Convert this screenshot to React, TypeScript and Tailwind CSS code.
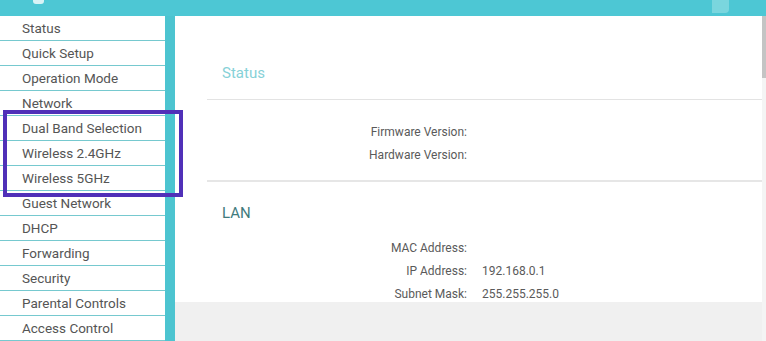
const menu = [
  'Status',
  'Quick Setup',
  'Operation Mode',
  'Network',
  'Dual Band Selection',
  'Wireless 2.4GHz',
  'Wireless 5GHz',
  'Guest Network',
  'DHCP',
  'Forwarding',
  'Security',
  'Parental Controls',
  'Access Control',
];

function InfoRow({ label, value }: { label: string; value?: string }) {
  return (
    <div className="flex h-[23px] items-center text-[12px] text-[#5a5a5a]">
      <span className="w-[260px] text-right">{label}</span>
      {value && <span className="ml-[15px]">{value}</span>}
    </div>
  );
}

export default function App() {
  return (
    <div
      className="relative flex h-[341px] w-[766px] flex-col overflow-hidden bg-white"
      style={{ fontFamily: 'Roboto, "Liberation Sans", sans-serif' }}
    >
      {/* Top bar */}
      <div className="relative h-[16px] shrink-0 bg-[#4dc7d4]">
        <div className="absolute left-[33px] top-0 h-[4px] w-[11px] rounded-b-[3px] bg-[#d8f3f6]" />
        <div className="absolute left-[712px] top-0 h-[13px] w-[17px] rounded-br-[4px] bg-[#7ad6de]" />
      </div>

      <div className="flex flex-1 overflow-hidden">
        {/* Sidebar */}
        <nav className="w-[165px] shrink-0 bg-white">
          {menu.map((item) => (
            <div
              key={item}
              className="flex h-[25px] items-center border-b-[1.5px] border-[#76c9cf] pl-[22px] pt-[1px] text-[13.5px] text-[#555]"
            >
              {item}
            </div>
          ))}
        </nav>
        <div className="w-[10px] shrink-0 bg-[#4cc4d0]" />

        {/* Main */}
        <main className="flex flex-1 flex-col">
          <div className="h-[286px] overflow-hidden pl-[32px]">
            <div className="flex h-[84px] items-end border-b border-[#e3e3e3] pb-[18px] pl-[15px] text-[15px] leading-[16px] text-[#86d1d7]">
              Status
            </div>
            <div className="border-b-2 border-[#e6e6e6] pb-[14px] pt-[20px]">
              <InfoRow label="Firmware Version:" />
              <InfoRow label="Hardware Version:" />
            </div>
            <div className="pl-[15px] pt-[21px] text-[15px] leading-[20px] text-[#3f7b7d]">LAN</div>
            <div className="mt-[13px]">
              <InfoRow label="MAC Address:" />
              <InfoRow label="IP Address:" value="192.168.0.1" />
              <InfoRow label="Subnet Mask:" value="255.255.255.0" />
            </div>
          </div>
          <div className="flex-1 bg-[#f0f0f0]" />
        </main>

        {/* Scrollbar */}
        <div className="flex w-[4px] shrink-0 flex-col bg-[#f4f4f4]">
          <div className="h-[62px] bg-[#c4c4c4]" />
        </div>
      </div>

      {/* Highlight box */}
      <div className="absolute left-[3px] top-[110px] h-[87px] w-[180px] border-4 border-[#5030b8]" />
    </div>
  );
}
